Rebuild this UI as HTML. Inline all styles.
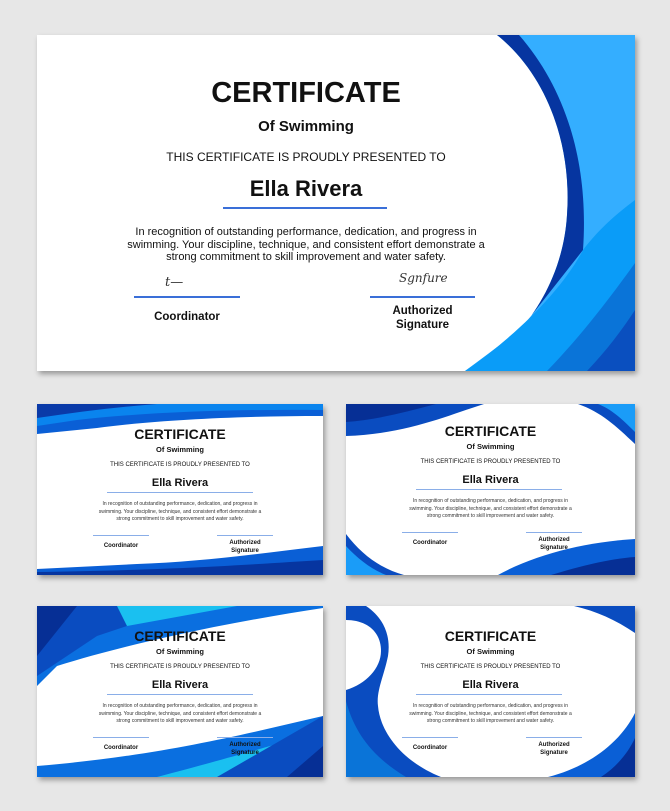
<!DOCTYPE html>
<html><head><meta charset="utf-8"><style>
*{margin:0;padding:0;box-sizing:border-box}
body{width:670px;height:811px;background:#e7e7e7;position:relative;overflow:hidden;font-family:"Liberation Sans",Arial,sans-serif;color:#111}
.c{position:absolute;background:#fff;overflow:hidden;box-shadow:2px 3px 5px rgba(0,0,0,.35)}
.c svg{position:absolute;left:0;top:0}
.t{position:absolute;left:0;width:100%;text-align:center;white-space:nowrap}
.b{font-weight:bold}
.ln{position:absolute;background:#3a6fd8}
</style></head><body>

<div class="c" style="left:37px;top:35px;width:598px;height:336px">
<svg width="598" height="336" viewBox="0 0 598 336">
<path d="M460,0 C510,40 535,110 530,180 C527,230 505,270 483,295 L428,336 L598,336 L598,0Z" fill="#34aeff"/>
<path d="M460,0 C510,40 535,110 530,180 C527,230 505,270 483,295 L546,215 C552,130 530,55 482,0Z" fill="#0635a0"/>
<path d="M428,336 C480,300 525,255 546,215 C565,190 585,175 598,165 L598,336Z" fill="#0a9cf8"/>
<path d="M510,336 C545,300 575,260 598,228 L598,336Z" fill="#0a74d8"/>
<path d="M550,336 C570,315 585,295 598,275 L598,336Z" fill="#0a4fbf"/>
</svg>
<div class="t b" style="top:42px;font-size:29px;left:-30px">CERTIFICATE</div>
<div class="t b" style="top:83px;font-size:15px;left:-30px">Of Swimming</div>
<div class="t" style="top:115px;font-size:12px;left:-30px">THIS CERTIFICATE IS PROUDLY PRESENTED TO</div>
<div class="t b" style="top:141px;font-size:22px;left:-30px">Ella Rivera</div>
<div class="ln" style="left:186px;top:172px;width:164px;height:1.5px"></div>
<div class="t" style="top:191px;font-size:11px;line-height:12.5px;left:-30px">In recognition of outstanding performance, dedication, and progress in<br>swimming. Your discipline, technique, and consistent effort demonstrate a<br>strong commitment to skill improvement and water safety.</div>
<div style="position:absolute;left:128px;top:240px;font-family:'DejaVu Serif',serif;font-style:italic;font-size:13px;color:#333">t—</div>
<div style="position:absolute;left:362px;top:236px;font-family:'DejaVu Serif',serif;font-style:italic;font-size:12px;color:#333">Sgnfure</div>
<div class="ln" style="left:97px;top:261px;width:106px;height:1.5px"></div>
<div class="ln" style="left:333px;top:261px;width:105px;height:1.5px"></div>
<div class="b" style="position:absolute;left:97px;width:106px;text-align:center;top:276px;font-size:11.5px">Coordinator</div>
<div class="b" style="position:absolute;left:333px;width:105px;text-align:center;top:269px;font-size:11.5px;line-height:14px">Authorized<br>Signature</div>
</div>

<div class="c" style="left:37px;top:404px;width:286px;height:171px">
<svg width="286" height="171" viewBox="0 0 286 171">
<path d="M0,0 L286,0 L286,12 C200,12 120,16 60,24 L0,30Z" fill="#0a5fd6"/>
<path d="M0,0 L286,0 L286,6 C200,5 110,8 40,16 L0,22Z" fill="#0a84ee"/>
<path d="M0,0 L120,0 C80,3 40,8 0,14Z" fill="#0a3aa8"/>
<path d="M0,171 L286,171 L286,142 C220,150 160,158 100,160 L0,165Z" fill="#0a5fd6"/>
<path d="M0,171 L286,171 L286,156 C220,160 140,166 0,168Z" fill="#0635a0"/>
</svg>
</div>
<div class="c" style="left:346px;top:404px;width:289px;height:171px">
<svg width="289" height="171" viewBox="0 0 289 171">
<path d="M0,0 L138,0 C100,12 60,30 0,32Z" fill="#0a4cc0"/>
<path d="M0,0 L90,0 C60,8 30,16 0,18Z" fill="#062f95"/>
<path d="M232,0 L289,0 L289,40 C270,22 255,8 232,0Z" fill="#0a4cc0"/>
<path d="M252,0 L289,0 L289,28 C275,14 265,5 252,0Z" fill="#1a9cf8"/>
<path d="M0,130 C15,150 35,165 58,171 L0,171Z" fill="#0a4cc0"/>
<path d="M0,142 C12,155 25,165 40,171 L0,171Z" fill="#1a9cf8"/>
<path d="M152,171 C190,150 240,138 289,135 L289,171Z" fill="#0a5fd6"/>
<path d="M205,171 C235,162 262,155 289,153 L289,171Z" fill="#062f95"/>
</svg>
</div>
<div class="c" style="left:37px;top:606px;width:286px;height:171px">
<svg width="286" height="171" viewBox="0 0 286 171">
<path d="M0,0 L286,0 L286,2 C200,15 100,35 20,60 L0,80Z" fill="#0a6fe0"/>
<path d="M0,0 L150,0 L60,30 L0,70Z" fill="#0a4cc0"/>
<path d="M80,0 L200,0 L90,20Z" fill="#1ac0f0"/>
<path d="M0,0 L40,0 L0,50Z" fill="#062f95"/>
<path d="M0,171 L0,160 C120,150 200,130 286,110 L286,171Z" fill="#0a6fe0"/>
<path d="M120,171 C200,150 250,135 286,125 L286,171Z" fill="#1ac0f0"/>
<path d="M180,171 L286,110 L286,171Z" fill="#0a4cc0"/>
<path d="M250,171 L286,140 L286,171Z" fill="#062f95"/>
</svg>
</div>
<div class="c" style="left:346px;top:606px;width:289px;height:171px">
<svg width="289" height="171" viewBox="0 0 289 171">
<path d="M0,0 L20,0 C38,12 45,30 42,50 C38,70 30,85 32,100 C34,125 55,155 95,171 L0,171Z" fill="#0a4cc0"/>
<path d="M0,14 C20,14 35,25 35,45 C35,62 20,78 0,84Z" fill="#fff"/>
<path d="M0,95 C8,125 25,150 60,171 L0,171Z" fill="#0a74d8"/>
<path d="M228,0 L289,0 L289,27 C270,14 250,5 228,0Z" fill="#0a4cc0"/>
<path d="M289,171 L202,171 C245,160 275,135 289,107Z" fill="#0a5fd6"/>
<path d="M289,171 L255,171 C272,160 283,145 289,132Z" fill="#062f95"/>
</svg>
</div>

<script>
var pos=[[37,404,286,0],[346,404,289,-3],[37,606,286,0],[346,606,289,0]];
pos.forEach(function(p){
var d=document.createElement('div');
d.style.cssText='position:absolute;left:'+p[0]+'px;top:'+(p[1]+p[3])+'px;width:'+p[2]+'px;height:171px;';
d.innerHTML='<div class="t b" style="top:22px;font-size:14px">CERTIFICATE</div>'+
'<div class="t b" style="top:41px;font-size:7.5px">Of Swimming</div>'+
'<div class="t" style="top:58px;font-size:6px">THIS CERTIFICATE IS PROUDLY PRESENTED TO</div>'+
'<div class="t b" style="top:73px;font-size:11px">Ella Rivera</div>'+
'<div class="ln" style="left:70px;top:88px;width:146px;height:1px;background:#8aaee8"></div>'+
'<div class="t" style="top:97px;font-size:5px;line-height:7.5px;color:#333">In recognition of outstanding performance, dedication, and progress in<br>swimming. Your discipline, technique, and consistent effort demonstrate a<br>strong commitment to skill improvement and water safety.</div>'+
'<div class="ln" style="left:56px;top:131px;width:56px;height:1px;background:#8aaee8"></div>'+
'<div class="ln" style="left:180px;top:131px;width:56px;height:1px;background:#8aaee8"></div>'+
'<div class="b" style="position:absolute;left:56px;width:56px;text-align:center;top:139px;font-size:6px">Coordinator</div>'+
'<div class="b" style="position:absolute;left:180px;width:56px;text-align:center;top:135px;font-size:6px;line-height:8px">Authorized<br>Signature</div>';
document.body.appendChild(d);
});
</script>
</body></html>
